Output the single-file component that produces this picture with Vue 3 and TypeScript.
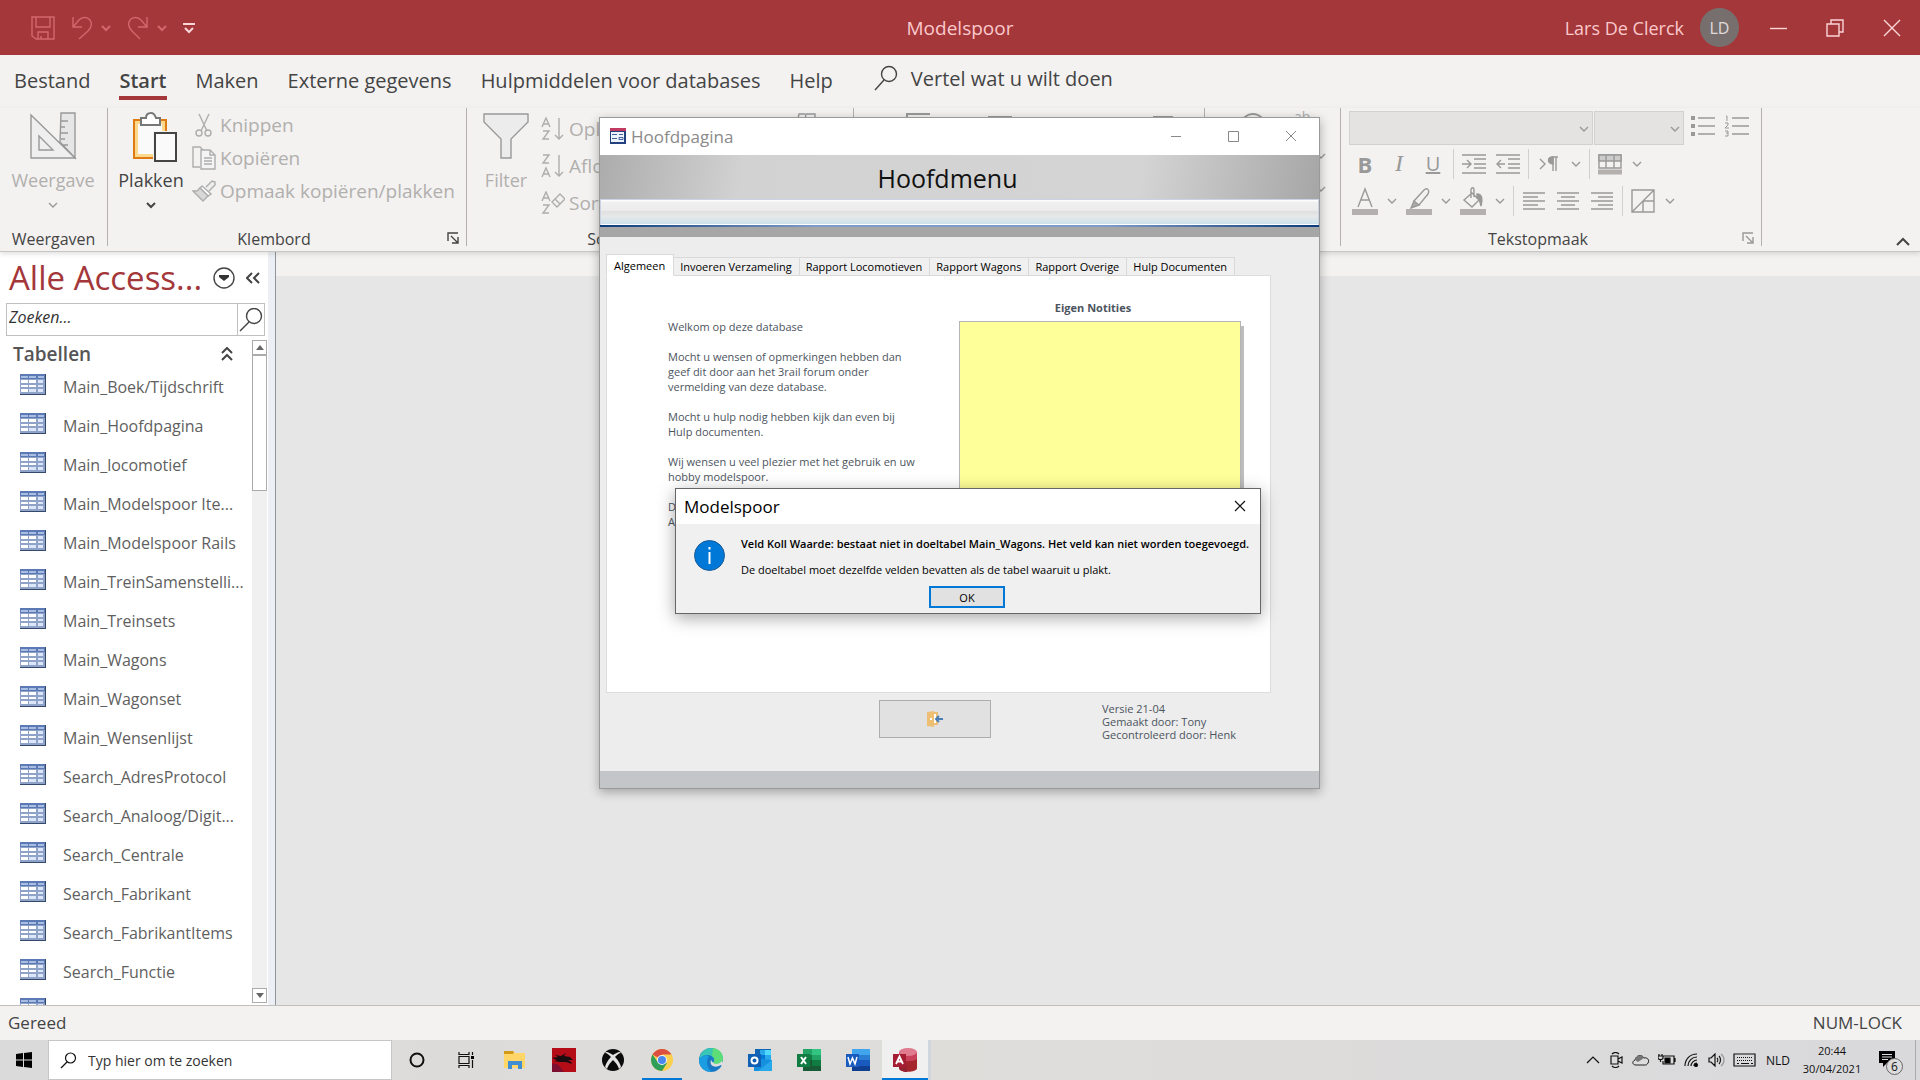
<script setup lang="ts">
import { ref } from 'vue'

const ribbonTabs = ['Bestand', 'Start', 'Maken', 'Externe gegevens', 'Hulpmiddelen voor databases', 'Help']
const activeRibbonTab = ref('Start')

const tables = [
  'Main_Boek/Tijdschrift',
  'Main_Hoofdpagina',
  'Main_locomotief',
  'Main_Modelspoor Ite...',
  'Main_Modelspoor Rails',
  'Main_TreinSamenstelli...',
  'Main_Treinsets',
  'Main_Wagons',
  'Main_Wagonset',
  'Main_Wensenlijst',
  'Search_AdresProtocol',
  'Search_Analoog/Digit...',
  'Search_Centrale',
  'Search_Fabrikant',
  'Search_FabrikantItems',
  'Search_Functie',
  'Search_Land',
]

const formTabs = [
  'Algemeen',
  'Invoeren Verzameling',
  'Rapport Locomotieven',
  'Rapport Wagons',
  'Rapport Overige',
  'Hulp Documenten',
]
const activeFormTab = ref('Algemeen')

const notes = ref('')
const filterText = ref('')
const taskSearch = ref('')
</script>

<template>
  <div class="screen">
    <header class="titlebar">
      <div class="quick">
        <button class="bare" aria-label="Opslaan">
          <svg width="24" height="24" viewBox="0 0 24 24" class="faint"><path d="M1 1H23V23H5L1 20ZM5 1V11H19V1M7 23V16H17V23M10 20V23" /></svg>
        </button>
        <button class="bare undo" aria-label="Ongedaan maken">
          <svg width="22" height="24" viewBox="0 0 22 24" class="faint"><path d="M2 1V11H11M2 11L8 4C12 0 18 1 20 6C21 9 20 12 17 15L8 23" /></svg>
        </button>
        <button class="bare" aria-label="Lijst ongedaan maken">
          <svg width="10" height="8" viewBox="0 0 10 8" class="faint thick"><path d="M1 2L5 6L9 2" /></svg>
        </button>
        <button class="bare redo" aria-label="Opnieuw">
          <svg width="22" height="24" viewBox="0 0 22 24" class="faint"><path d="M20 1V11H11M20 11L14 4C10 0 4 1 2 6C1 9 2 12 5 15L13 23" /></svg>
        </button>
        <button class="bare" aria-label="Lijst opnieuw">
          <svg width="10" height="8" viewBox="0 0 10 8" class="faint thick"><path d="M1 2L5 6L9 2" /></svg>
        </button>
        <button class="bare custom" aria-label="Werkbalk aanpassen">
          <svg width="12" height="12" viewBox="0 0 12 12" class="bright thick"><path d="M0 2H12M2 6L6 10L10 6" /></svg>
        </button>
      </div>
      <h1>Modelspoor</h1>
      <div class="account">
        <span class="user">Lars De Clerck</span>
        <span class="avatar">LD</span>
        <button class="bare winbtn" aria-label="Minimaliseren">
          <svg width="18" height="18" viewBox="0 0 18 18" class="bright"><path d="M0 9.500H17" /></svg>
        </button>
        <button class="bare winbtn" aria-label="Herstellen">
          <svg width="18" height="18" viewBox="0 0 18 18" class="bright"><path d="M1 5H13V17H1ZM5 5V1H17V13H13" /></svg>
        </button>
        <button class="bare winbtn" aria-label="Sluiten">
          <svg width="18" height="18" viewBox="0 0 18 18" class="bright"><path d="M1 1L17 17M17 1L1 17" /></svg>
        </button>
      </div>
    </header>

    <nav class="tabs">
      <button
        v-for="t in ribbonTabs"
        :key="t"
        class="bare tab"
        :class="{ active: t === activeRibbonTab }"
        @click="activeRibbonTab = t"
      >{{ t }}</button>
      <button class="bare tell">
        <svg width="24" height="26" viewBox="0 0 24 26" class="dark"><circle cx="15" cy="9" r="7.500" /><path d="M10 15L1 25" /></svg>
        <span>Vertel wat u wilt doen</span>
      </button>
    </nav>

    <section class="ribbon">
      <div class="group views">
        <button class="bare big off">
          <svg width="48" height="48" viewBox="0 0 48 48" class="gray"><path d="M32 1H46V46L31 30ZM32 9H39M32 15H36M32 21H39M32 27H36M32 33H39" fill="#e6e6e6" /><path d="M2 3L46 46H2Z" fill="#efefef" /><path d="M10 24L24 38H10Z" /></svg>
          <span>Weergave</span>
          <svg width="10" height="8" viewBox="0 0 10 8" class="gray"><path d="M1 2L5 6L9 2" /></svg>
        </button>
        <p class="caption">Weergaven</p>
      </div>

      <div class="group clipboard">
        <div class="body">
          <button class="bare big">
            <svg width="48" height="50" viewBox="0 0 48 50">
              <path d="M4 8H36V46H4Z" fill="#fbd98c" stroke="#e07b14" stroke-width="2" />
              <path d="M8 12H32V42H8Z" fill="#fafafa" />
              <path d="M11 13V6H16C16 3 18 1 21 1S25 3 26 6H30V13Z" fill="#fff" stroke="#777" stroke-width="2" />
              <path d="M23 19H47V50H23Z" fill="#f3f2f1" />
              <path d="M25 21H46V49H25Z" fill="#fafafa" stroke="#444" stroke-width="2" />
            </svg>
            <span>Plakken</span>
            <svg width="10" height="8" viewBox="0 0 10 8" class="dark thick"><path d="M1 2L5 6L9 2" /></svg>
          </button>
          <div class="stack">
            <button class="bare small">
              <svg width="24" height="24" viewBox="0 0 24 24" class="soft"><path d="M7 1L15 18M17 1L9 18" /><circle cx="7" cy="20" r="3" /><circle cx="16" cy="20" r="3" /></svg>
              <span>Knippen</span>
            </button>
            <button class="bare small">
              <svg width="24" height="24" viewBox="0 0 24 24" class="soft"><path d="M8 21H1V1H8L12 5" /><path d="M9 4H18L23 9V23H9Z" fill="#f4f4f4" /><path d="M18 4V9H23M12 12H20M12 15H20M12 18H20" /></svg>
              <span>Kopiëren</span>
            </button>
            <button class="bare small">
              <svg width="24" height="24" viewBox="0 0 24 24" class="soft"><path d="M14 8L20 2L23 3V6L17 12" fill="#eee" /><path d="M10 7L19 15L16 17L8 9Z" fill="#fff" /><path d="M8 9L16 17L11 22L1 12L5 12Z" fill="#d8d8d8" /></svg>
              <span>Opmaak kopiëren/plakken</span>
            </button>
          </div>
        </div>
        <p class="caption">Klembord</p>
        <button class="bare launcher" aria-label="Klembord openen">
          <svg width="12" height="12" viewBox="0 0 12 12" class="dark"><path d="M1 9V1H11M4 4L11 11M11 5V11H5" /></svg>
        </button>
      </div>

      <div class="group sorting">
        <div class="body">
          <button class="bare big off">
            <svg width="48" height="48" viewBox="0 0 48 48" class="gray"><path d="M2 2H46V10L29 27V46H19V27L2 10Z" fill="#ececec" /></svg>
            <span>Filter</span>
          </button>
          <div class="stack wide">
            <button class="bare small">
              <svg width="24" height="24" viewBox="0 0 24 24" class="soft"><path d="M1 10L5 1L9 10M2 7H8M2 14H8L2 22H8M18 1V22M14 18L18 22L22 18" /></svg>
              <span>Oplopend</span>
            </button>
            <button class="bare small">
              <svg width="24" height="24" viewBox="0 0 24 24" class="soft"><path d="M2 1H8L2 9H8M1 23L5 14L9 23M2 20H8M18 1V22M14 18L18 22L22 18" /></svg>
              <span>Aflopend</span>
            </button>
            <button class="bare small">
              <svg width="24" height="24" viewBox="0 0 24 24" class="soft"><path d="M1 10L5 1L9 10M2 7H8M2 14H8L2 22H8M11 11L19 3L24 8L16 16ZM14 8L19 13" /></svg>
              <span>Sortering</span>
            </button>
          </div>
          <svg width="24" height="24" viewBox="0 0 24 24" class="gray edge"><path d="M2 20L6 2H12M10 20L13 2H22V6H13" /></svg>
        </div>
        <p class="caption">Sorteren en filteren</p>
      </div>

      <div class="group records">
        <svg width="26" height="26" viewBox="0 0 26 26" class="gray thick"><path d="M2 20V1H25" /></svg>
        <svg width="24" height="8" viewBox="0 0 24 8"><path d="M0 3H24V8H0Z" fill="#999" /></svg>
        <svg width="20" height="8" viewBox="0 0 20 8" class="last"><path d="M0 3H20V8H0Z" fill="#999" /></svg>
      </div>

      <div class="group finding">
        <svg width="26" height="26" viewBox="0 0 26 26" class="gray thick"><circle cx="13" cy="14" r="12" /></svg>
        <span class="replace">ab</span>
        <div class="arrows">
          <svg width="10" height="8" viewBox="0 0 10 8" class="gray"><path d="M1 2L5 6L9 2" /></svg>
          <svg width="10" height="8" viewBox="0 0 10 8" class="gray"><path d="M1 2L5 6L9 2" /></svg>
        </div>
      </div>

      <div class="group format">
        <div class="row">
          <div class="combo family">
            <select aria-label="Lettertype" disabled></select>
            <svg width="10" height="8" viewBox="0 0 10 8" class="gray"><path d="M1 2L5 6L9 2" /></svg>
          </div>
          <div class="combo size">
            <select aria-label="Tekengrootte" disabled></select>
            <svg width="10" height="8" viewBox="0 0 10 8" class="gray"><path d="M1 2L5 6L9 2" /></svg>
          </div>
          <button class="bare tool" aria-label="Opsommingstekens">
            <svg width="24" height="22" viewBox="0 0 24 22" class="gray"><path d="M7 3H24M7 11H24M7 19H24" /><path d="M0 3H4M0 11H4M0 19H4" stroke-width="4" /></svg>
          </button>
          <button class="bare tool" aria-label="Nummering">
            <svg width="24" height="22" viewBox="0 0 24 22" class="gray"><path d="M7 3H24M7 11H24M7 19H24" /><path d="M1 1H2V6M0 8H3V10L0 13H4M0 16H3V21H0M1 18H3" stroke-width="1" /></svg>
          </button>
        </div>
        <div class="row">
          <button class="bare tool bold">B</button>
          <button class="bare tool italic">I</button>
          <button class="bare tool under">U</button>
          <i class="sep"></i>
          <button class="bare tool" aria-label="Inspringing vergroten">
            <svg width="24" height="20" viewBox="0 0 24 20" class="gray"><path d="M0 1H24M12 5H24M12 10H24M12 14H24M0 19H24M0 10H9M5 6L9 10L5 14" /></svg>
          </button>
          <button class="bare tool" aria-label="Inspringing verkleinen">
            <svg width="24" height="20" viewBox="0 0 24 20" class="gray"><path d="M0 1H24M12 5H24M12 10H24M12 14H24M0 19H24M1 10H9M5 6L1 10L5 14" /></svg>
          </button>
          <i class="sep"></i>
          <button class="bare tool" aria-label="Tekstrichting">
            <svg width="20" height="16" viewBox="0 0 20 16" class="gray"><path d="M1 3L6 8L1 13M13 1H19M14 1V15M17 1V15" /><path d="M14 1C8 0 8 8 14 8Z" fill="#999" /></svg>
          </button>
          <button class="bare drop" aria-label="Meer"><svg width="10" height="8" viewBox="0 0 10 8" class="gray"><path d="M1 2L5 6L9 2" /></svg></button>
          <i class="sep"></i>
          <button class="bare tool" aria-label="Rasterlijnen">
            <svg width="24" height="22" viewBox="0 0 24 22" class="gray"><path d="M1 2H23V15H1Z" /><path d="M1 2H23V8H1Z" fill="#ccc" /><path d="M8 2V15M16 2V15" /><path d="M0 19H24" stroke="#b3b0ad" stroke-width="5" /></svg>
          </button>
          <button class="bare drop" aria-label="Meer"><svg width="10" height="8" viewBox="0 0 10 8" class="gray"><path d="M1 2L5 6L9 2" /></svg></button>
        </div>
        <div class="row">
          <button class="bare tool" aria-label="Tekstkleur">
            <svg width="26" height="28" viewBox="0 0 26 28" class="gray"><path d="M6 20L13 2L20 20M9 13H17" /><path d="M0 25H26" stroke="#b3b0ad" stroke-width="6" /></svg>
          </button>
          <button class="bare drop" aria-label="Meer"><svg width="10" height="8" viewBox="0 0 10 8" class="gray"><path d="M1 2L5 6L9 2" /></svg></button>
          <button class="bare tool" aria-label="Markeren">
            <svg width="26" height="28" viewBox="0 0 26 28" class="gray"><path d="M8 14L18 3C21 0 24 3 22 7L13 18L9 17Z" /><path d="M8 14L13 18L5 21Z" fill="#aaa" /><path d="M0 25H26" stroke="#b3b0ad" stroke-width="6" /></svg>
          </button>
          <button class="bare drop" aria-label="Meer"><svg width="10" height="8" viewBox="0 0 10 8" class="gray"><path d="M1 2L5 6L9 2" /></svg></button>
          <button class="bare tool" aria-label="Achtergrondkleur">
            <svg width="26" height="28" viewBox="0 0 26 28" class="gray"><path d="M12 6L4 13L12 20L19 13ZM11 11V3C11 0 14 0 14 3V10" /><path d="M17 7C22 7 23 12 21 19C20 14 19 12 17 10Z" fill="#999" /><path d="M0 25H26" stroke="#b3b0ad" stroke-width="6" /></svg>
          </button>
          <button class="bare drop" aria-label="Meer"><svg width="10" height="8" viewBox="0 0 10 8" class="gray"><path d="M1 2L5 6L9 2" /></svg></button>
          <i class="sep"></i>
          <button class="bare tool" aria-label="Links uitlijnen">
            <svg width="24" height="20" viewBox="0 0 24 20" class="gray"><path d="M1 2H23M1 6H16M1 10H23M1 14H16M1 18H23" /></svg>
          </button>
          <button class="bare tool" aria-label="Centreren">
            <svg width="24" height="20" viewBox="0 0 24 20" class="gray"><path d="M1 2H23M5 6H19M1 10H23M5 14H19M1 18H23" /></svg>
          </button>
          <button class="bare tool" aria-label="Rechts uitlijnen">
            <svg width="24" height="20" viewBox="0 0 24 20" class="gray"><path d="M1 2H23M8 6H23M1 10H23M8 14H23M1 18H23" /></svg>
          </button>
          <i class="sep"></i>
          <button class="bare tool" aria-label="Alternatieve rijkleur">
            <svg width="24" height="24" viewBox="0 0 24 24" class="gray"><path d="M1 1H23V23H1ZM1 23L23 1M12 12V23M12 12H23" /></svg>
          </button>
          <button class="bare drop" aria-label="Meer"><svg width="10" height="8" viewBox="0 0 10 8" class="gray"><path d="M1 2L5 6L9 2" /></svg></button>
        </div>
        <p class="caption">Tekstopmaak</p>
        <button class="bare launcher" aria-label="Tekstopmaak openen">
          <svg width="12" height="12" viewBox="0 0 12 12" class="gray"><path d="M1 9V1H11M4 4L11 11M11 5V11H5" /></svg>
        </button>
      </div>

      <button class="bare collapse" aria-label="Lint samenvouwen">
        <svg width="14" height="10" viewBox="0 0 14 10" class="dark thick"><path d="M1 8L7 2L13 8" /></svg>
      </button>
    </section>

    <main class="work">
      <aside class="pane">
        <div class="pane-main">
          <div class="pane-head">
            <h2>Alle Access...</h2>
            <button class="bare" aria-label="Categorie kiezen">
              <svg width="22" height="22" viewBox="0 0 22 22" class="dark"><circle cx="11" cy="11" r="10" /><path d="M6 8H16V10L11 14L6 10Z" fill="#333" stroke="none" /></svg>
            </button>
            <button class="bare" aria-label="Deelvenster sluiten">
              <svg width="14" height="12" viewBox="0 0 14 12" class="dark thick"><path d="M6 1L1 6L6 11M13 1L8 6L13 11" /></svg>
            </button>
          </div>
          <div class="finder">
            <input v-model="filterText" type="text" placeholder="Zoeken..." aria-label="Zoeken" />
            <button class="bare" aria-label="Zoek">
              <svg width="24" height="24" viewBox="0 0 24 24" class="dark"><circle cx="15" cy="8" r="7.500" /><path d="M10 14L1 23" /></svg>
            </button>
          </div>
          <div class="pane-body">
            <div class="listing">
              <div class="list-head">
                <h3>Tabellen</h3>
                <button class="bare" aria-label="Samenvouwen">
                  <svg width="12" height="14" viewBox="0 0 12 14" class="dark thick"><path d="M1 6L6 1L11 6M1 13L6 8L11 13" /></svg>
                </button>
              </div>
              <ul>
                <li v-for="name in tables" :key="name">
                  <svg width="26" height="21" viewBox="0 0 26 21">
                    <path d="M0 0H26V21H0Z" fill="#34496b" />
                    <path d="M0 0H25V20H0Z" fill="#8fa3c8" />
                    <path d="M0 0H25V5H0Z" fill="#5b79b4" />
                    <path d="M1 2H8V4H1ZM9 2H16V4H9ZM18 2H24V4H18Z" fill="#a9bde2" />
                    <path d="M1 6H8V9H1ZM9 6H16V9H9ZM1 11H8V13H1ZM9 11H16V13H9ZM1 15H8V18H1Z" fill="#fff" />
                    <path d="M18 6H23V9H18ZM18 11H23V13H18ZM9 15H16V18H9ZM18 15H23V18H18Z" fill="#dbe6fb" />
                  </svg>
                  <span>{{ name }}</span>
                </li>
              </ul>
            </div>
            <div class="scroll">
              <button class="bare" aria-label="Omhoog"><svg width="8" height="5" viewBox="0 0 8 5"><path d="M4 0L8 5H0Z" fill="#666" /></svg></button>
              <div class="thumb"></div>
              <button class="bare end" aria-label="Omlaag"><svg width="8" height="5" viewBox="0 0 8 5"><path d="M4 5L8 0H0Z" fill="#666" /></svg></button>
            </div>
          </div>
        </div>
      </aside>
      <div class="canvas"></div>
    </main>

    <footer class="status"><span>Gereed</span><span>NUM-LOCK</span></footer>

    <div class="taskbar">
      <button class="bare start" aria-label="Start">
        <svg width="16" height="16" viewBox="0 0 16 16"><path d="M0 2L7 1V7.500H0ZM8 1L16 0V7.500H8ZM0 8.500H7V15L0 14ZM8 8.500H16V16L8 15Z" fill="#000" /></svg>
      </button>
      <label class="search">
        <svg width="17" height="17" viewBox="0 0 17 17" class="black"><circle cx="10.500" cy="6" r="5" /><path d="M7 10L1 16" /></svg>
        <input v-model="taskSearch" type="text" placeholder="Typ hier om te zoeken" aria-label="Typ hier om te zoeken" />
      </label>
      <div class="apps">
        <button class="bare" aria-label="Cortana"><svg width="16" height="16" viewBox="0 0 16 16"><circle cx="8" cy="8" r="6.500" fill="none" stroke="#111" stroke-width="2" /></svg></button>
        <button class="bare" aria-label="Taakweergave"><svg width="16" height="16" viewBox="0 0 16 16" class="black"><path d="M1 0V2.500H11V0M1 4.500H11V11.500H1ZM1 16V13.500H11V16M14.500 0V3M14.500 8V16" /><path d="M13 4H16V7H13Z" fill="#000" stroke="none" /></svg></button>
        <button class="bare" aria-label="Verkenner"><svg width="22" height="18" viewBox="0 0 22 18"><path d="M0 0H9L11 2H21V17H0Z" fill="#ffd667" /><path d="M0 0H9L10 1L9 3H0Z" fill="#d39a1a" /><path d="M4 10H18V18H14V14H8V18H4Z" fill="#3f8fd2" /></svg></button>
        <button class="bare" aria-label="Draak"><svg width="24" height="24" viewBox="0 0 24 24"><path d="M0 0H24V24H0Z" fill="#b50d18" /><path d="M0 16C6 14 9 20 12 24H0Z" fill="#7d1030" /><path d="M0 10L6 9L3 7L9 8L14 5L12 8L18 9L21 12L16 12L19 14L20 16L14 14L8 14L2 13L5 12Z" fill="#1b0c10" /></svg></button>
        <button class="bare" aria-label="Xbox"><svg width="22" height="22" viewBox="0 0 22 22"><circle cx="11" cy="11" r="11" fill="#0b0b0b" /><path d="M4 3C7 3 9 5 11 6C13 5 15 3 18 3L19 4C17 4 15 6 13 8C16 11 18 14 19 18L17 20C16 16 13 13 11 11C9 13 6 16 5 20L3 18C4 14 6 11 9 8C7 6 5 4 3 4Z" fill="#e2e2e2" /></svg></button>
        <button class="bare running" aria-label="Chrome"><svg width="22" height="22" viewBox="0 0 22 22"><circle cx="11" cy="11" r="11" fill="#fcd04f" /><path d="M11 11L1.500 5.500A11 11 0 0 1 20.500 5.500H11Z" fill="#dd4f40" /><path d="M1.500 5.500A11 11 0 0 0 11 22L16 14L11 11L6 12Z" fill="#2f9e58" /><circle cx="11" cy="11" r="5" fill="#f4f4f4" /><circle cx="11" cy="11" r="4" fill="#4a87ee" /></svg></button>
        <button class="bare" aria-label="Edge"><svg width="24" height="24" viewBox="0 0 24 24"><circle cx="12" cy="12" r="12" fill="#1779c4" /><path d="M0 11C2 3 7 0 12 0C19 0 24 5 24 11C24 16 17 17 14 15C17 11 13 7 9 7C5 7 2 9 0 11Z" fill="#39c6b5" /><path d="M14 0C21 1 24 6 24 11C24 16 17 17 14 15C17 12 15 9 13 8Z" fill="#5edc78" /><path d="M0 12C2 8 6 6 10 8C7 11 7 20 13 24C5 24 0 19 0 12Z" fill="#1b9de2" /><path d="M12 12C10 17 15 21 22 17L24 19L25 16L23 13C19 17 15 17 12 12Z" fill="#dedcdd" /></svg></button>
        <button class="bare" aria-label="Outlook"><svg width="24" height="22" viewBox="0 0 24 22"><path d="M7 0H23V13H7Z" fill="#1066b5" /><path d="M12 1H17V6H12Z" fill="#28a8ea" /><path d="M17 1H23V6H17Z" fill="#50d9ff" /><path d="M12 6H17V11H12Z" fill="#0078d4" /><path d="M17 6H23V11H17Z" fill="#28a8ea" /><path d="M6 9L24 11V22H6Z" fill="#1490df" /><path d="M24 11L10 22H24Z" fill="#28a8ea" /><path d="M0 5H13V18H0Z" fill="#0f5fb5" /><circle cx="6.500" cy="11.500" r="3" fill="none" stroke="#fff" stroke-width="2" /></svg></button>
        <button class="bare" aria-label="Excel"><svg width="24" height="22" viewBox="0 0 24 22"><path d="M6 0H24V22H6Z" fill="#21a366" /><path d="M15 0H24V6H15Z" fill="#33c481" /><path d="M6 6H15V11H6Z" fill="#107c41" /><path d="M6 11H24V22H6Z" fill="#185c37" /><path d="M15 11H24V17H15Z" fill="#107c41" /><path d="M0 5H13V18H0Z" fill="#107c41" /><path d="M4 8L9 15M9 8L4 15" stroke="#fff" stroke-width="2" /></svg></button>
        <button class="bare" aria-label="Word"><svg width="24" height="22" viewBox="0 0 24 22"><path d="M6 0H24V6H6Z" fill="#41a5ee" /><path d="M6 6H24V11H6Z" fill="#2b7cd3" /><path d="M6 11H24V17H6Z" fill="#185abd" /><path d="M6 17H24V22H6Z" fill="#103f91" /><path d="M0 5H13V18H0Z" fill="#185abd" /><path d="M2 8L4 15L6.500 9L9 15L11 8" stroke="#fff" stroke-width="1.500" fill="none" /></svg></button>
        <button class="bare running current" aria-label="Access"><svg width="24" height="24" viewBox="0 0 24 24"><path d="M6 4V20C6 25 24 25 24 20V4Z" fill="#a4262c" /><path d="M6 4V11C10 14 20 14 24 11V4Z" fill="#c8405a" /><ellipse cx="15" cy="4" rx="9" ry="4" fill="#e07a8e" /><path d="M6 17H14V24C10 24 6 22 6 20Z" fill="#942030" /><path d="M0 6H13V19H0Z" fill="#a41d33" /><path d="M3 16L6.500 8.500L10 16M4.500 13.500H8.500" stroke="#fff" stroke-width="1.800" fill="none" /></svg></button>
      </div>
      <div class="tray">
        <svg width="14" height="10" viewBox="0 0 14 10" class="black"><path d="M1 8L7 2L13 8" /></svg>
        <svg width="16" height="16" viewBox="0 0 16 16" class="black"><path d="M3 4H10V12H3ZM10 7L14 5V11L10 9M4 2C6 0 9 0 11 2M4 14C6 16 9 16 11 14" /></svg>
        <svg width="18" height="12" viewBox="0 0 18 12"><path d="M4 11C0 11 0 7 3 6C4 1 10 0 12 4C15 3 18 6 16 9C15 11 14 11 13 11Z" fill="#ddd" stroke="#222" /><path d="M3 6C4 1 10 0 12 4L6 8Z" fill="#777" /></svg>
        <svg width="18" height="14" viewBox="0 0 18 14" class="black"><path d="M5 3H16V11H5V8M17 5V9M1 1V3M4 1V3M0 3H5V5C5 7 0 7 0 5ZM2.500 6V9" /><path d="M7 5H12V10H7Z" fill="#000" /></svg>
        <svg width="16" height="14" viewBox="0 0 16 14" class="black"><path d="M1 13C1 6 6 1 13 1M4 13C4 8 8 4 13 4M7 13C7 10 10 7 13 7M10 13C10 11 11 10 13 10" /><circle cx="12" cy="12" r="1.500" fill="#000" /></svg>
        <svg width="17" height="14" viewBox="0 0 17 14" class="black"><path d="M1 5H3L7 1V13L3 9H1ZM9 5C10 6 10 8 9 9M11 3C13 5 13 9 11 11" /><path d="M13 1C17 4 17 10 13 13" stroke="#999" /></svg>
        <svg width="23" height="14" viewBox="0 0 23 14" class="black"><path d="M1 1H22V13H1Z" /><path d="M4 4.500H20M4 7.500H20" stroke-dasharray="1 1" /><path d="M4 10.500H6M8 10.500H16M18 10.500H20" /></svg>
        <span class="lang">NLD</span>
        <div class="clock"><span>20:44</span><span>30/04/2021</span></div>
        <button class="bare notify" aria-label="Meldingen">
          <svg width="18" height="18" viewBox="0 0 18 18"><path d="M1 1H17V13H9L5 17V13H1Z" fill="#000" /><path d="M4 4.500H14M4 7H14M4 9.500H10" stroke="#ddd" /></svg>
          <span>6</span>
        </button>
      </div>
    </div>

    <section class="window" aria-label="Hoofdpagina">
      <div class="win-title">
        <svg width="16" height="16" viewBox="0 0 16 16"><path d="M0 1H16V16H0Z" fill="#24417f" /><path d="M1 4H14V14H1Z" fill="#eef3fb" /><path d="M0 0H16V3H0Z" fill="#c03a62" /><path d="M2 6.500H7M2 10.500H7M9 6.500H13M9 11.500H13V9.500H9Z" stroke="#41629d" fill="none" /></svg>
        <span>Hoofdpagina</span>
        <button class="bare" aria-label="Minimaliseren"><svg width="11" height="11" viewBox="0 0 11 11" class="mid"><path d="M0 5.500H10" /></svg></button>
        <button class="bare" aria-label="Maximaliseren"><svg width="11" height="11" viewBox="0 0 11 11" class="mid"><path d="M0.500 0.500H10.500V10.500H0.500Z" /></svg></button>
        <button class="bare" aria-label="Sluiten"><svg width="12" height="12" viewBox="0 0 12 12" class="mid"><path d="M1 1L11 11M11 1L1 11" /></svg></button>
      </div>
      <div class="banner">Hoofdmenu</div>
      <div class="gloss"></div>
      <div class="line"></div>
      <div class="band"></div>
      <div class="form">
        <div class="form-tabs" role="tablist">
          <button
            v-for="t in formTabs"
            :key="t"
            class="bare form-tab"
            role="tab"
            :class="{ active: t === activeFormTab }"
            @click="activeFormTab = t"
          >{{ t }}</button>
        </div>
        <div class="page">
          <div class="welcome">
            <p>Welkom op deze database</p>
            <p>Mocht u wensen of opmerkingen hebben dan<br />geef dit door aan het 3rail forum onder<br />vermelding van deze database.</p>
            <p>Mocht u hulp nodig hebben kijk dan even bij<br />Hulp documenten.</p>
            <p>Wij wensen u veel plezier met het gebruik en uw<br />hobby modelspoor.</p>
            <p>De<br />Admin</p>
          </div>
          <div class="notes">
            <label for="notes">Eigen Notities</label>
            <textarea id="notes" v-model="notes"></textarea>
          </div>
        </div>
        <div class="form-foot">
          <button class="exit" aria-label="Afsluiten">
            <svg width="17" height="16" viewBox="0 0 17 16"><path d="M4 2H10V13H4Z" fill="#fff" stroke="#ecbf74" stroke-width="2" /><path d="M0 1L7 0V16L0 15Z" fill="#ecbf74" /><path d="M3 7H5V9H3Z" fill="#fff" /><path d="M16 8H9M12 5L9 8L12 11" stroke="#4a7fb5" stroke-width="2" fill="none" /></svg>
          </button>
          <p class="version">Versie 21-04<br />Gemaakt door: Tony<br />Gecontroleerd door: Henk</p>
        </div>
      </div>
      <div class="win-foot"></div>
    </section>

    <section class="dialog" role="alertdialog" aria-label="Modelspoor">
      <div class="dlg-title">
        <span>Modelspoor</span>
        <button class="bare" aria-label="Sluiten"><svg width="12" height="12" viewBox="0 0 12 12" class="black"><path d="M1 1L11 11M11 1L1 11" /></svg></button>
      </div>
      <div class="dlg-body">
        <div class="message">
          <svg width="31" height="31" viewBox="0 0 31 31"><circle cx="15.500" cy="15.500" r="15" fill="#0078d7" stroke="#1a5c98" /><path d="M15.500 12V24M15.500 7V9.500" stroke="#fff" stroke-width="2" /></svg>
          <div>
            <p><strong>Veld Koll Waarde: bestaat niet in doeltabel Main_Wagons. Het veld kan niet worden toegevoegd.</strong></p>
            <p>De doeltabel moet dezelfde velden bevatten als de tabel waaruit u plakt.</p>
          </div>
        </div>
        <button class="ok">OK</button>
      </div>
    </section>
  </div>
</template>

<style>
body {
  margin: 0;
  overflow: hidden;
}
</style>

<style scoped>
.screen {
  position: relative;
  display: flex;
  flex-direction: column;
  height: 100vh;
  font-family: "Open Sans", "Noto Sans", sans-serif;
  color: #444;
  background: #e6e6e6;
}
.screen * {
  box-sizing: border-box;
}
h1, h2, h3, p, ul {
  margin: 0;
  padding: 0;
  font-weight: 400;
  list-style: none;
}
svg {
  display: block;
  flex: none;
}
.bare {
  display: flex;
  align-items: center;
  padding: 0;
  border: 0;
  background: none;
  font: inherit;
  color: inherit;
  white-space: nowrap;
}
.faint, .bright, .dark, .gray, .soft, .mid, .black {
  fill: none;
  stroke-width: 1.400;
}
.faint { stroke: #d2686c; }
.bright { stroke: #fbd5d8; }
.dark { stroke: #444; }
.gray { stroke: #999; }
.soft { stroke: #adadad; }
.mid { stroke: #888; stroke-width: 1; }
.black { stroke: #111; stroke-width: 1.200; }
.thick { stroke-width: 2; }

/* title bar */
.titlebar {
  display: grid;
  grid-template-columns: 1fr auto 1fr;
  align-items: center;
  flex: none;
  height: 55px;
  background: #a4373a;
  color: #fbc9cc;
  font-size: 18px;
}
.titlebar h1 { font-size: 19px; }
.quick {
  display: flex;
  align-items: center;
  gap: 8px;
  padding-left: 31px;
}
.undo, .redo, .custom { margin-left: 8px; }
.account {
  display: flex;
  align-items: center;
  justify-content: flex-end;
  padding-right: 19px;
}
.avatar {
  display: flex;
  align-items: center;
  justify-content: center;
  width: 39px;
  height: 39px;
  margin: 0 12px 0 16px;
  border-radius: 50%;
  background: #766f6e;
  color: #e0dcdb;
  font-size: 16px;
}
.winbtn {
  justify-content: center;
  width: 56px;
  height: 40px;
}
.winbtn:last-child { width: 18px; margin-left: 20px; }

/* ribbon */
.tabs {
  display: flex;
  flex: none;
  gap: 29px;
  height: 53px;
  padding-left: 14px;
  background: #f3f2f1;
  font-size: 20px;
}
.tab {
  height: 45px;
  padding-top: 10px;
  border-bottom: 4px solid transparent;
}
.tab.active {
  border-color: #a4373a;
  font-weight: 600;
}
.tell {
  gap: 13px;
  height: 46px;
  margin-left: 12px;
}
.ribbon {
  position: relative;
  z-index: 1;
  display: flex;
  flex: none;
  height: 144px;
  padding-bottom: 5px;
  border-bottom: 1px solid #c8c6c4;
  background: #f3f2f1;
  box-shadow: 0 2px 5px rgba(0, 0, 0, 0.12);
  font-size: 18px;
}
.group {
  position: relative;
  border-right: 1px solid #b3b0ad;
  height: 138px;
}
.views { width: 108px; }
.clipboard { width: 359px; }
.sorting { width: 387px; }
.records { width: 351px; }
.finding { width: 136px; }
.format { width: 421px; padding: 3px 0 0 7px; }
.body { display: flex; }
.big {
  flex-direction: column;
  width: 106px;
  padding-top: 4px;
}
.big span { line-height: 28px; margin-top: 6px; }
.big svg + span + svg { margin-top: 7px; }
.clipboard .big { width: 68px; margin-left: 9px; }
.clipboard .big svg:first-child { margin-left: 6px; }
.clipboard .big span { margin-top: 4px; }
.sorting .big { width: 70px; }
.off, .small { color: #b1afad; }
.stack {
  display: flex;
  flex-direction: column;
  padding-left: 7px;
  font-size: 19px;
}
.small { gap: 4px; height: 33px; }
.stack.wide { padding: 2px 0 0; }
.wide .small { height: 37px; }
.sorting .body { padding-left: 4px; }
.edge { margin: 4px 0 0 136px; }
.caption {
  position: absolute;
  bottom: -6px;
  width: 100%;
  left: 0;
  line-height: 26px;
  font-size: 16px;
  text-align: center;
}
.clipboard .caption, .format .caption { padding-right: 26px; }
.launcher {
  position: absolute;
  right: 7px;
  bottom: 2px;
}
.records {
  display: flex;
  gap: 57px;
  padding: 5px 0 0 51px;
}
.last { margin-left: 84px; }
.finding {
  display: flex;
  padding: 4px 0 0 35px;
}
.replace {
  width: 16px;
  margin-left: 28px;
  font-size: 14px;
  line-height: 10px;
  color: #aaa;
}
.arrows {
  display: flex;
  flex-direction: column;
  gap: 25px;
  margin-left: 6px;
  padding-top: 40px;
}
.row { display: flex; align-items: center; height: 37px; }
.row:first-child { height: 34px; align-items: flex-start; }
.combo { position: relative; height: 34px; margin-left: 1px; }
.combo select {
  width: 100%;
  height: 100%;
  border: 1px solid #c6c4c2;
  background: #dfdedd;
  appearance: none;
}
.combo svg { position: absolute; right: 4px; top: 14px; }
.family { width: 244px; }
.size { width: 90px; margin-right: 2px; }
.tool { justify-content: center; width: 34px; height: 30px; }
.bold { font-size: 22px; font-weight: 700; color: #999; }
.italic { font: italic 24px "Liberation Serif", serif; color: #999; }
.under { font-size: 20px; color: #999; text-decoration: underline; }
.drop { justify-content: center; width: 20px; height: 30px; }
.sep { width: 1px; height: 30px; margin: 0 3px; background: #d2d0ce; }
.collapse {
  position: absolute;
  right: 10px;
  bottom: 4px;
}

/* navigation pane */
.work {
  display: flex;
  flex: 1;
  min-height: 0;
}
.pane {
  flex: none;
  width: 276px;
  padding-right: 7px;
  border-right: 1px solid #8f959c;
  background: #eceff3;
}
.pane-main {
  display: flex;
  flex-direction: column;
  height: 100%;
  background: #fff;
}
.pane-head {
  display: flex;
  flex: none;
  align-items: center;
  justify-content: space-between;
  height: 51px;
  padding: 0 8px 0 9px;
}
.pane-head h2 {
  width: 192px;
  font-size: 33px;
  line-height: 46px;
  white-space: nowrap;
  color: #a4373a;
}
.finder {
  display: flex;
  flex: none;
  height: 33px;
  margin: 0 3px 0 6px;
  border: 1px solid #c0c0c0;
}
.finder input {
  flex: 1;
  min-width: 0;
  padding: 0 0 5px 2px;
  border: 0;
  border-right: 1px solid #c0c0c0;
  font: italic 16px "Open Sans", sans-serif;
}
.finder input::placeholder, .search input::placeholder { color: #333; opacity: 1; }
.finder button { width: 26px; justify-content: center; }
.pane-body {
  display: flex;
  flex: 1;
  min-height: 0;
  padding: 4px 1px 2px 0;
}
.listing { flex: 1; overflow: hidden; margin-bottom: -2px; }
.list-head {
  display: flex;
  align-items: center;
  justify-content: space-between;
  height: 27px;
  padding: 0 19px 0 13px;
}
.list-head h3 { font-size: 19px; font-weight: 600; color: #555; }
.listing li {
  display: flex;
  align-items: center;
  gap: 17px;
  height: 39px;
  padding-left: 20px;
  font-size: 16px;
  white-space: nowrap;
  color: #5f5f5f;
}
.listing li svg { margin-bottom: 4px; }
.scroll {
  display: flex;
  flex-direction: column;
  width: 15px;
  background: #f0f0f0;
}
.scroll button, .thumb {
  justify-content: center;
  flex: none;
  height: 15px;
  border: 1px solid #ababab;
  background: #fff;
}
.thumb { height: 136px; }
.scroll .end { margin-top: auto; }
.canvas {
  flex: 1;
  height: 24px;
  background: #f3f2f1;
}

/* status bar */
.status {
  display: flex;
  flex: none;
  align-items: center;
  justify-content: space-between;
  height: 35px;
  padding: 0 18px 2px 8px;
  border-top: 1px solid #c0bfbe;
  background: #f3f2f1;
  font-size: 17px;
}

/* task bar */
.taskbar {
  display: flex;
  flex: none;
  height: 40px;
  background: linear-gradient(90deg, #dbdadb, #dfddda 50%, #d9d9dc);
  color: #111;
}
.start { justify-content: center; width: 48px; }
.search {
  display: flex;
  align-items: center;
  gap: 11px;
  width: 344px;
  padding-left: 11px;
  border: 1px solid #c6c6c6;
  background: #fff;
}
.search input {
  flex: 1;
  min-width: 0;
  padding: 0;
  border: 0;
  font: 14px "Open Sans", sans-serif;
}
.apps { display: flex; }
.apps button {
  justify-content: center;
  width: 49px;
}
.running { background: linear-gradient(#0078d7, #0078d7) 50% 100% / 40px 2px no-repeat; }
.apps .current {
  border-right: 3px solid #cfd6de;
  background: linear-gradient(#0078d7, #0078d7) 50% 100% / 49px 2px no-repeat #f1f0f1;
}
.tray {
  display: flex;
  align-items: center;
  gap: 8px;
  margin-left: auto;
  padding-right: 4px;
}
.lang { font-size: 12px; margin: 0 2px; }
.clock {
  display: flex;
  flex-direction: column;
  align-items: center;
  width: 64px;
  line-height: 18px;
  font-size: 11px;
}
.notify {
  position: relative;
  width: 44px;
  height: 40px;
  padding: 0 0 2px 6px;
  border-right: 1px solid #aaa;
}
.notify span {
  position: absolute;
  left: 14px;
  top: 18px;
  width: 17px;
  height: 17px;
  border: 1px solid #666;
  border-radius: 50%;
  background: #dcdcdc;
  font-size: 12px;
  line-height: 15px;
  text-align: center;
}

/* form window */
.window {
  position: absolute;
  z-index: 2;
  left: 599px;
  top: 117px;
  display: flex;
  flex-direction: column;
  width: 721px;
  height: 672px;
  border: 1px solid #9a9a9a;
  background: #ededed;
  box-shadow: 0 3px 10px rgba(0, 0, 0, 0.3);
}
.win-title {
  display: flex;
  align-items: center;
  height: 37px;
  padding: 0 0 1px 10px;
  background: #fff;
  color: #8a8a8a;
  font-size: 17px;
}
.win-title span { flex: 1; margin-left: 5px; }
.win-title button { justify-content: center; width: 57px; height: 30px; }
.banner {
  height: 44px;
  line-height: 46px;
  padding-right: 24px;
  background: linear-gradient(100deg, #acacac, #d2d2d2 20%, #d4d4d4 75%, #a6a6a6);
  color: #111;
  font-size: 25px;
  text-align: center;
}
.gloss {
  height: 26px;
  border: 1px solid #c9d3e4;
  border-bottom: 0;
  background: linear-gradient(#fff, #f0f0f0 10%, #ebebeb 42%, #e0e0e0 46%, #e6e8e9 65%, #cfe2ec 94%, #fff 96%);
}
.line {
  height: 2px;
  background: linear-gradient(90deg, #0c3c7c, #7f9cc6 30%, #7f9cc6 70%, #0c3c7c);
}
.band { height: 10px; background: #a6a6a6; }
.form { flex: 1; padding: 17px 48px 0 6px; }
.form-tabs {
  display: flex;
  align-items: flex-end;
  height: 22px;
}
.form-tab {
  height: 19px;
  padding: 0 7px 0 6px;
  border: 1px solid #d9d9d9;
  border-left: 0;
  background: #f0f0f0;
  color: #000;
  font-size: 11px;
}
.form-tab.active {
  height: 22px;
  padding: 0 8px 0 7px;
  border-left: 1px solid #d9d9d9;
  border-bottom-color: #fff;
  background: #fff;
}
.page {
  display: flex;
  height: 418px;
  margin-top: -1px;
  border: 1px solid #dcdcdc;
  background: #fff;
  color: #4c545e;
  font-size: 11px;
  line-height: 15px;
}
.form-tab.active { position: relative; z-index: 1; }
.welcome { width: 291px; padding: 43px 0 0 61px; white-space: nowrap; }
.welcome p { margin-bottom: 15px; }
.notes {
  display: flex;
  flex-direction: column;
  gap: 6px;
  width: 343px;
  padding: 24px 0 0 61px;
}
.notes label { padding-right: 14px; font-weight: 700; text-align: center; }
.notes textarea {
  height: 280px;
  border: 1px solid #b5b5b5;
  border-radius: 0;
  background: #ffff99;
  box-shadow: 3px 5px 0 #bdbdbd;
  resize: none;
}
.form-foot {
  display: flex;
  align-items: flex-start;
  padding: 7px 0 0 273px;
}
.exit {
  display: flex;
  align-items: center;
  justify-content: center;
  width: 112px;
  height: 38px;
  border: 1px solid #adadad;
  background: #e1e1e1;
}
.version {
  margin: 2px 0 0 111px;
  font-size: 11px;
  line-height: 13px;
  color: #4c545e;
  white-space: nowrap;
}
.win-foot { height: 17px; background: #c4c5c9; }

/* message box */
.dialog {
  position: absolute;
  z-index: 3;
  left: 675px;
  top: 488px;
  width: 586px;
  border: 1px solid #666;
  background: #f0f0f0;
  box-shadow: 0 4px 16px rgba(0, 0, 0, 0.35);
  color: #000;
}
.dlg-title {
  display: flex;
  align-items: center;
  justify-content: space-between;
  height: 35px;
  padding: 0 14px 1px 8px;
  background: #fff;
  font-size: 17px;
}
.dlg-body {
  display: flex;
  flex-direction: column;
  align-items: center;
  padding: 11px 20px 5px 18px;
  font-size: 11px;
  line-height: 18px;
}
.message { display: flex; align-items: flex-start; gap: 16px; width: 100%; white-space: nowrap; }
.message svg { margin-top: 5px; }
.message strong { font-weight: 600; }
.message p + p { margin-top: 8px; }
.ok {
  width: 76px;
  height: 22px;
  margin-top: 7px;
  padding: 0;
  border: 2px solid #0078d7;
  background: #e1e1e1;
  font: 11px "Open Sans", sans-serif;
}
</style>
